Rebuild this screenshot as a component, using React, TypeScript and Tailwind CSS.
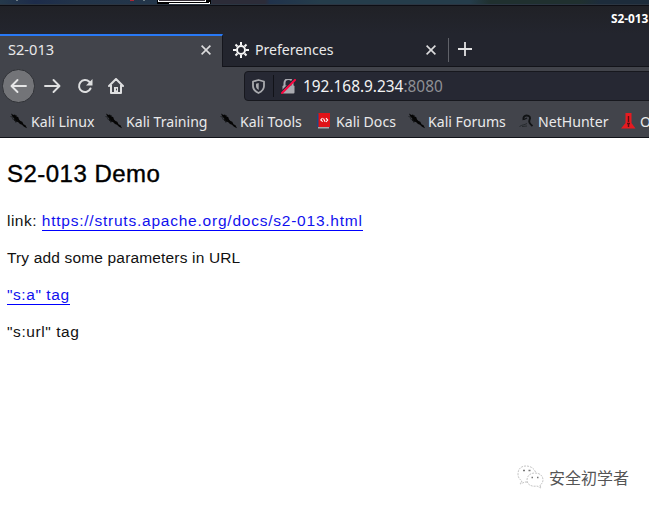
import type { ReactNode } from "react";

function Dragon() {
  return (
    <svg width="18" height="16" viewBox="0 0 18 16" className="shrink-0" fill="#050505">
      <path d="M1 .5l2.500 1.500 1.500-.5 1.300 1.800 2 1 .7 2.200 1.500 1.500 1.800.7 1.200 2.500 2 1 1.500 3-3-1.500-2-2-2-.700-2-2-2.500-.300L3.800 7l.5-1.500L2.300 3.500z" />
      <path d="M.5 3.500l3 1M5.500 9.500l2-1.500M6.500 2l-.5 1M2 5.500l4 2" stroke="#17191c" strokeWidth=".8" />
    </svg>
  );
}

function Book() {
  return (
    <svg width="13" height="16" viewBox="0 0 13 16" className="shrink-0">
      <path d="M0 1h2v13H0z" fill="#194a83" />
      <path d="M1.500 0H13v14H1.500z" fill="#e01217" />
      <path d="M1 14h11v1.500H1z" fill="#a7a9ac" />
      <path d="M5.500 5L3.800 7l1.900 1.600M9 5.200L10.700 7 9 9M6.500 5.500l1.600 3.300" fill="none" stroke="#fff" strokeWidth="1.100" />
    </svg>
  );
}

function Hunter() {
  return (
    <svg width="15" height="16" viewBox="0 0 15 16" className="shrink-0" fill="none" stroke="#111315">
      <path d="M4.500 7C4 4 5.500 2.500 7.500 2.500c3 0 4.500 2 3 4.500-1 2 .5 4 3 6" strokeWidth="1.900" />
      <path d="M5 6.500l3-1.500" strokeWidth="1.200" />
      <path d="M.5 13.500c3-2 5-1.500 7.500-3M3 13.500l5-.5" strokeWidth=".8" stroke="#202326" />
    </svg>
  );
}

function Offensive() {
  return (
    <svg width="15" height="16" viewBox="0 0 15 16" className="shrink-0">
      <path d="M4.500 0h6v10l4 5.500H0L4.500 10z" fill="#e61a20" />
      <path d="M7.500 3v6M6 10.500h3M7.500 10v4" stroke="#5c0e12" strokeWidth="1.400" />
    </svg>
  );
}

function Bookmark({ icon, label, box, text }: { icon: ReactNode; label: string; box: string; text: string }) {
  return (
    <div className={`flex shrink-0 items-center ${box}`}>
      {icon}
      <span className={`whitespace-nowrap pt-[2px] ${text}`}>{label}</span>
    </div>
  );
}

function Close() {
  return (
    <svg width="10" height="10" viewBox="0 0 10 10" fill="none" stroke="#dcdcdd" strokeWidth="1.600">
      <path d="M.6.600l8.800 8.800M9.400.600L.6 9.400" />
    </svg>
  );
}

function Gear() {
  return (
    <svg width="16" height="16" viewBox="0 0 16 16" fill="none" stroke="#f5f5f5">
      <circle cx="8" cy="8" r="4" strokeWidth="2" />
      <path d="M8 0v3M8 13v3M0 8h3M13 8h3M2.500 2.500l2 2M11.500 11.500l2 2M2.500 13.500l2-2M11.500 4.500l2-2" strokeWidth="2" />
    </svg>
  );
}

export default function App() {
  return (
    <div className="flex h-[506px] w-[649px] flex-col overflow-hidden bg-white font-['Noto_Sans',sans-serif] text-[14.600px] text-[#e9e9ea]">
      <div className="flex h-[4px] shrink-0 bg-[linear-gradient(90deg,#25394b_0px,#1d2c4a_35px,#223449_80px,#23364a_156px,#23364a_211px,#2c2c38_212px,#2c2c38_265px,#20324b_270px,#253d4b_320px,#253d4b_470px,#20302f_490px,#20302f_580px,#1d2c3b_600px)]">
        <div className="ml-4 h-px w-[2px] bg-[#718087]" />
        <div className="ml-[112px] h-px w-[4px] bg-[#a82835]" />
        <div className="ml-[9px] h-px w-[2px] bg-[#718087]" />
        <div className="ml-3 h-[4px] w-[54px] bg-black">
          <div className="ml-px h-[2px] w-[48px] border-b border-l border-r border-white bg-[#3b353d]" />
          <div className="ml-3 h-[2px] w-[41px] border-b border-r border-white" />
        </div>
      </div>
      <div className="h-[2px] shrink-0 border-t border-[#2b3541] bg-[#0d0e14]" />
      <header className="flex h-[28px] shrink-0 justify-end bg-[linear-gradient(#202126,#23252e)]">
        <div className="w-[38px] overflow-hidden whitespace-nowrap pt-[4px] text-[11.800px] font-bold leading-[17px] text-white">S2-013</div>
      </header>
      <div className="flex h-[33px] shrink-0 bg-[#23252e]">
        <div className="flex w-[223px] shrink-0 items-center justify-between border-r border-t-2 border-r-[#15161d] border-t-[#2879f6] bg-[#42444b] pb-[3px] pl-2 pr-[11px]">
          <span className="text-[14.600px]">S2-013</span>
          <Close />
        </div>
        <div className="flex flex-1 items-center border-b border-[#13141a] pl-[10px]">
          <Gear />
          <span className="ml-[6px] w-[171px] text-[14.100px]">Preferences</span>
          <Close />
          <div className="ml-[12px] h-6 w-px bg-[#606269]" />
          <svg className="ml-[9px] mb-[2px]" width="14" height="14" viewBox="0 0 14 14" stroke="#e2e2e3" strokeWidth="1.800"><path d="M7 0v14M0 7h14" /></svg>
        </div>
      </div>
      <nav className="flex h-[38px] shrink-0 items-center bg-[#42444b] pl-[2px]">
        <div className="flex h-[34px] w-[33px] shrink-0 items-center justify-center rounded-full border border-[#2f3136] bg-[#737478]">
          <svg width="17" height="16" viewBox="0 0 17 16" fill="none" stroke="#e6e6e7" strokeWidth="1.900" strokeLinecap="round" strokeLinejoin="round"><path d="M7.500 2L1.500 8l6 6M2 8h14" /></svg>
        </div>
        <svg className="ml-[9px] shrink-0" width="17" height="16" viewBox="0 0 17 16" fill="none" stroke="#dedfe0" strokeWidth="1.900" strokeLinecap="round" strokeLinejoin="round"><path d="M9.500 2l6 6-6 6M15 8H1" /></svg>
        <svg className="ml-[16px] shrink-0" width="16" height="16" viewBox="0 0 16 16" fill="none" stroke="#dedfe0" strokeWidth="2"><path d="M13.500 10.500A6 6 0 1 1 12.300 3.800l1.700 1.900" strokeLinecap="round" /><path d="M15.500 1v6.500H9z" fill="#dedfe0" stroke="none" /></svg>
        <svg className="ml-[15px] shrink-0" width="16" height="16" viewBox="0 0 16 16" fill="none" stroke="#dedfe0" strokeWidth="2" strokeLinecap="round" strokeLinejoin="round"><path d="M1 8l7-7 7 7M3 7v8h10V7" /><path d="M6 9h4v5H6z" fill="#dedfe0" stroke="none" /><path d="M8.500 11v1" stroke="#42444b" strokeWidth="1" /></svg>
        <div className="ml-[120px] flex h-[30px] w-[410px] shrink-0 items-center rounded-[4px] border border-[#17181e] bg-[#262833] pl-[7px]">
          <svg className="shrink-0" width="13" height="15" viewBox="0 0 13 15" fill="none" stroke="#a9aaae" strokeWidth="1.800"><path d="M6.500 1L12 2.500v4.500c0 3-2.200 5.500-5.500 7C3.200 12.500 1 10 1 7V2.500z" strokeLinejoin="round" /><path d="M6.700 4v7C4.500 9.800 4 8.500 4 7V4.700z" fill="#a9aaae" stroke="none" /></svg>
          <div className="ml-[8px] h-[22px] w-px shrink-0 bg-[#111218]" />
          <svg className="ml-[7px] shrink-0" width="15" height="15" viewBox="0 0 15 15"><path d="M3.500 7V4a4 4 0 0 1 8 0v3" fill="none" stroke="#aaaab0" strokeWidth="2" /><rect x="1.500" y="6.500" width="12" height="8" rx="1" fill="#aaaab0" /><path d="M0 13L13 0" stroke="#262833" strokeWidth="1.500" /><path d="M1 14L14 1" stroke="#fb0740" strokeWidth="2" strokeLinecap="round" /></svg>
          <span className="ml-[7px] whitespace-nowrap pt-px text-[15.400px] text-[#f3f3f4]">192.168.9.234<span className="text-[#8f9095]">:8080</span></span>
        </div>
      </nav>
      <div className="flex h-[33px] shrink-0 items-center overflow-hidden border-b border-[#111319] bg-[#42444b] pl-[10px] text-[14.100px]">
        <Bookmark icon={<Dragon />} label="Kali Linux" box="w-[95px]" text="ml-[3px]" />
        <Bookmark icon={<Dragon />} label="Kali Training" box="w-[115px]" text="ml-[3px]" />
        <Bookmark icon={<Dragon />} label="Kali Tools" box="w-[97px]" text="ml-[2px]" />
        <Bookmark icon={<Book />} label="Kali Docs" box="w-[91px]" text="ml-[6px]" />
        <Bookmark icon={<Dragon />} label="Kali Forums" box="w-[111px]" text="ml-[2px]" />
        <Bookmark icon={<Hunter />} label="NetHunter" box="w-[102px]" text="ml-[4px]" />
        <Bookmark icon={<Offensive />} label="Offensive Security" box="w-[180px]" text="ml-[4px]" />
      </div>
      <main className="flex flex-1 flex-col pl-[7px] font-['Liberation_Sans',Arial,sans-serif] text-[15.500px] text-[#111]">
        <h2 className="mt-[20px] h-[32px] text-[24px] font-normal leading-[32px] tracking-[0.480px] text-black [-webkit-text-stroke:0.4px_black]">S2-013 Demo</h2>
        <p className="mt-[21px] h-5 leading-5"><span className="tracking-[0.480px]">link: </span><a className="inline-block h-5 border-b border-[#0000ff] leading-5 tracking-[0.770px] text-[#1111ee]">https://struts.apache.org/docs/s2-013.html</a></p>
        <p className="mt-[17px] h-5 leading-5 tracking-[0.160px]">Try add some parameters in URL</p>
        <p className="mt-[17px] h-5 leading-5"><a className="inline-block h-5 border-b border-[#0000ff] leading-5 tracking-[0.560px] text-[#1111ee]">"s:a" tag</a></p>
        <p className="mt-[17px] h-5 leading-5 tracking-[0.580px]">"s:url" tag</p>
        <div className="mb-[17px] mr-[20px] mt-auto flex items-center self-end">
          <svg width="27" height="24" viewBox="0 0 27 24" fill="#fff" stroke="#b5b5b5" strokeWidth=".8" strokeDasharray="2 1">
            <path d="M5 16l-2 3 5-2c8 1 12-3 11-8C18 3 13 1 9 1 4 1 1 4 1 9c0 3 1 5 4 7z" />
            <path d="M23 20l1 3-4-2c-5 1-10-1-10-6 0-4 3-7 8-7s8 3 8 7c0 2-1 4-3 5z" />
            <path d="M6 5.500h2M11.500 5.500h2M14.500 12.500h1.500M20 12.500h1.500" stroke="#777" strokeWidth="1.300" />
          </svg>
          <span className="ml-[5px] font-['Noto_Sans_CJK_SC',sans-serif] text-[16px] leading-6 text-[#555] [text-shadow:-1px_-1px_0_white]">安全初学者</span>
        </div>
      </main>
    </div>
  );
}
